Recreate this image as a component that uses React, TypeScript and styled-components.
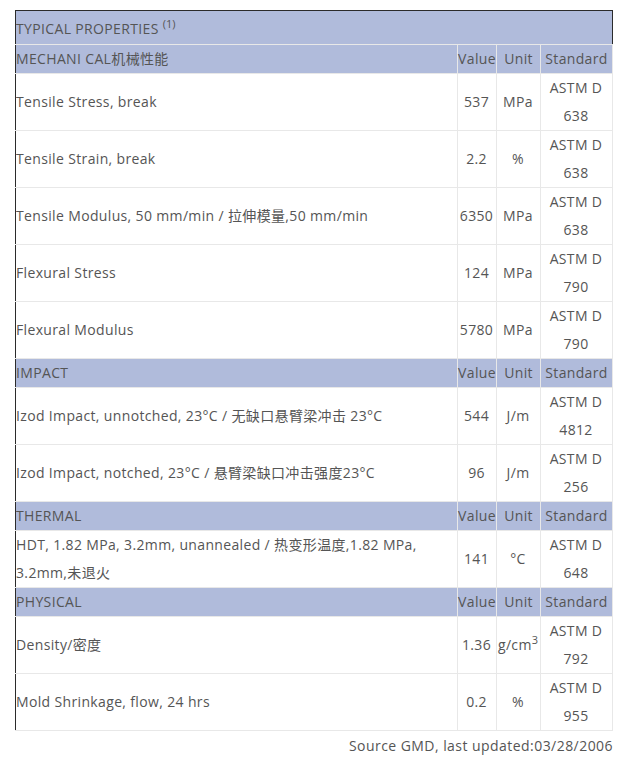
import styled, { createGlobalStyle } from "styled-components";

const GlobalStyle = createGlobalStyle`
    body {
        margin: 0;
        background: #fff;
        font-family: "Open Sans", "Noto Sans CJK SC", sans-serif;
        color: #555;
    }
`;

const Page = styled.div`
    padding: 10px 9px 0 15px;
    width: 598px;
`;

const Table = styled.table`
    width: 598px;
    table-layout: fixed;
    border-collapse: collapse;
    border: 1px solid #2b2b2b;
    font-size: 14px;
    line-height: 28px;
    letter-spacing: 0.35px;
    color: #555;
`;

const Col = styled.col<{ $w?: number }>`
    width: ${(p) => (p.$w ? `${p.$w}px` : "auto")};
`;

const TitleCell = styled.td`
    background: #b0bbdb;
    padding: 4px 1px 1px 0;
    border-bottom: 1px solid #e8e8e8;
    text-align: left;
`;

const Sup = styled.sup`
    font-size: 11px;
    line-height: 0;
    letter-spacing: 0;
`;

const HeadRow = styled.tr`
    background: #b0bbdb;
`;

const HeadCell = styled.td<{ $center?: boolean }>`
    padding: 0;
    text-align: ${(p) => (p.$center ? "center" : "left")};
    border: 1px solid #e8e8e8;
    border-left: ${(p) => (p.$center ? "1px solid #e8e8e8" : "none")};
    white-space: nowrap;
    overflow: visible;
`;

const Cell = styled.td<{ $center?: boolean }>`
    padding: 0 1px 0 0;
    text-align: ${(p) => (p.$center ? "center" : "left")};
    border: 1px solid #e8e8e8;
    border-left: ${(p) => (p.$center ? "1px solid #e8e8e8" : "none")};
    height: 56px;
    vertical-align: middle;
`;

const Footer = styled.div`
    text-align: right;
    font-size: 14px;
    line-height: 28px;
    letter-spacing: 0.45px;
    color: #555;
    padding-top: 1px;
`;

type Row = { name: React.ReactNode; value: string; unit: React.ReactNode; std: string };

const sections: { title: string; rows: Row[] }[] = [
    {
        title: "MECHANI CAL机械性能",
        rows: [
            { name: "Tensile Stress, break", value: "537", unit: "MPa", std: "638" },
            { name: "Tensile Strain, break", value: "2.2", unit: "%", std: "638" },
            { name: "Tensile Modulus, 50 mm/min / 拉伸模量,50 mm/min", value: "6350", unit: "MPa", std: "638" },
            { name: "Flexural Stress", value: "124", unit: "MPa", std: "790" },
            { name: "Flexural Modulus", value: "5780", unit: "MPa", std: "790" },
        ],
    },
    {
        title: "IMPACT",
        rows: [
            { name: "Izod Impact, unnotched, 23°C / 无缺口悬臂梁冲击 23°C", value: "544", unit: "J/m", std: "4812" },
            { name: "Izod Impact, notched, 23°C / 悬臂梁缺口冲击强度23°C", value: "96", unit: "J/m", std: "256" },
        ],
    },
    {
        title: "THERMAL",
        rows: [
            { name: "HDT, 1.82 MPa, 3.2mm, unannealed / 热变形温度,1.82 MPa, 3.2mm,未退火", value: "141", unit: "°C", std: "648" },
        ],
    },
    {
        title: "PHYSICAL",
        rows: [
            { name: "Density/密度", value: "1.36", unit: <>g/cm<Sup>3</Sup></>, std: "792" },
            { name: "Mold Shrinkage, flow, 24 hrs", value: "0.2", unit: "%", std: "955" },
        ],
    },
];

export default function App() {
    return (
        <Page>
            <GlobalStyle />
            <Table>
                <colgroup>
                    <Col />
                    <Col $w={39} />
                    <Col $w={44} />
                    <Col $w={72} />
                </colgroup>
                <tbody>
                    <tr>
                        <TitleCell colSpan={4}>TYPICAL PROPERTIES <Sup>(1)</Sup></TitleCell>
                    </tr>
                    {sections.map((s) => (
                        <>
                            <HeadRow key={s.title}>
                                <HeadCell>{s.title}</HeadCell>
                                <HeadCell $center>Value</HeadCell>
                                <HeadCell $center>Unit</HeadCell>
                                <HeadCell $center>Standard</HeadCell>
                            </HeadRow>
                            {s.rows.map((r, i) => (
                                <tr key={s.title + i}>
                                    <Cell>{r.name}</Cell>
                                    <Cell $center>{r.value}</Cell>
                                    <Cell $center>{r.unit}</Cell>
                                    <Cell $center>ASTM D<br />{r.std}</Cell>
                                </tr>
                            ))}
                        </>
                    ))}
                </tbody>
            </Table>
            <Footer>Source GMD, last updated:03/28/2006</Footer>
        </Page>
    );
}
